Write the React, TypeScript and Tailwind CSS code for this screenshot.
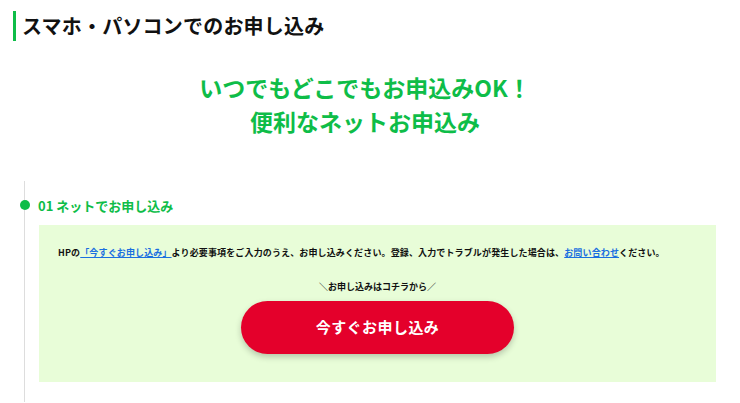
export default function App() {
  return (
    <div
      className="min-h-screen bg-white text-[#111]"
      style={{ fontFamily: '"Noto Sans CJK JP", "Noto Sans", sans-serif' }}
    >
      {/* Heading */}
      <div className="pl-[13px] pt-[11px]">
        <h2 className="flex items-center border-l-[3px] border-[#0ebd48] pl-[6px] h-[30px] text-[20px] font-bold leading-none tracking-[0.01em]">
          スマホ・パソコンでのお申し込み
        </h2>
      </div>

      {/* Catch copy */}
      <div className="mt-[29px] pr-[10px] text-center text-[23px] font-bold leading-[34px] text-[#0ebd48]">
        <p>いつでもどこでもお申込みOK！</p>
        <p>便利なネットお申込み</p>
      </div>

      {/* Timeline */}
      <div className="mt-[43px] ml-[24px] border-l border-[#dddddd] pt-[16px] pb-[20px]">
        <div className="relative flex items-center h-[16px] pl-[13px]">
          <span className="absolute left-[-5.5px] top-[3px] h-[10px] w-[10px] rounded-full bg-[#0ebd48]" />
          <h3 className="text-[13px] font-bold text-[#0ebd48] leading-none">01 ネットでお申し込み</h3>
        </div>

        <div className="mt-[12px] ml-[14px] mr-[24px] bg-[#e8fdd8] h-[157px] flex flex-col">
          <p className="mt-[21px] pl-[19px] text-[9px] font-bold leading-[14px] tracking-[0.015em] text-[#111]">
            HPの
            <a href="#" className="text-[#1a6fe0] underline">「今すぐお申し込み」</a>
            より必要事項をご入力のうえ、お申し込みください。登録、入力でトラブルが発生した場合は、
            <a href="#" className="text-[#1a6fe0] underline">お問い合わせ</a>
            ください。
          </p>
          <p className="mt-[20px] text-center text-[9px] font-bold leading-[14px] text-[#111]">
            ＼お申し込みはコチラから／
          </p>
          <div className="mt-[7px] flex justify-center">
            <a
              href="#"
              className="flex items-center justify-center w-[273px] h-[53px] rounded-full bg-[#e4002b] text-white text-[15px] font-bold tracking-[0.03em] shadow-[0_3px_6px_rgba(0,0,0,0.22)]"
            >
              今すぐお申し込み
            </a>
          </div>
        </div>
      </div>
    </div>
  );
}
